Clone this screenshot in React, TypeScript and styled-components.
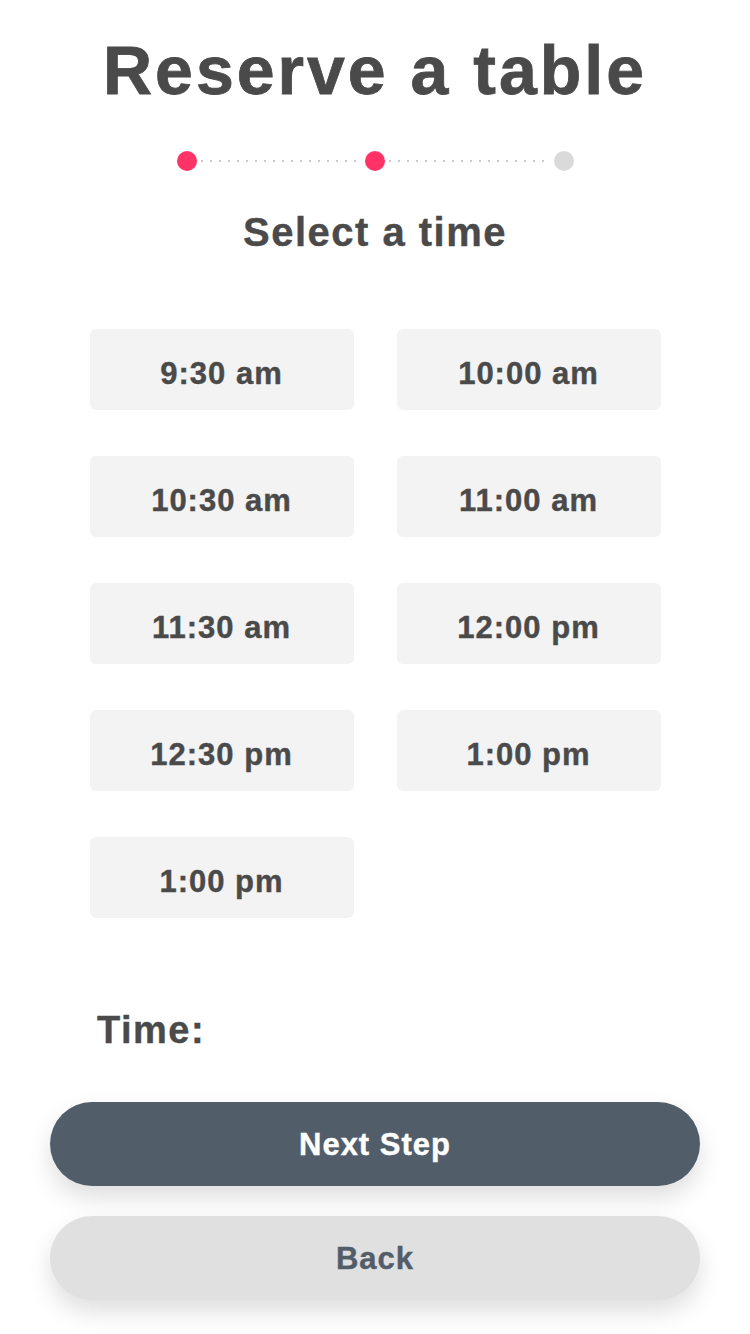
import { createGlobalStyle } from "styled-components";
import styled from "styled-components";

const GlobalStyle = createGlobalStyle`
  body {
    margin: 0;
    background: #fff;
    font-family: "Liberation Sans", Arial, sans-serif;
    color: #4a4a4a;
  }
`;

const Page = styled.div`
  width: 750px;
  min-height: 1334px;
  padding-top: 30px;
  display: flex;
  flex-direction: column;
  box-sizing: border-box;
`;

const Title = styled.h1`
  margin: 0;
  font-size: 68px;
  line-height: 80px;
  font-weight: 700;
  letter-spacing: 3px;
  text-align: center;
  -webkit-text-stroke: 0.8px #4a4a4a;
`;

const Stepper = styled.div`
  width: 397px;
  height: 20px;
  margin: 41px auto 0;
  display: flex;
  align-items: center;
`;

const Dot = styled.span<{ $active?: boolean }>`
  width: 20px;
  height: 20px;
  border-radius: 50%;
  flex-shrink: 0;
  background: ${({ $active }) => ($active ? "#ff3366" : "#dadada")};
`;

const DottedLine = styled.span`
  flex: 1;
  height: 2px;
  margin: 0 4px;
  background: repeating-linear-gradient(
    to right,
    #c9c9c9 0 2px,
    transparent 2px 9px
  );
`;

const Subtitle = styled.h2`
  margin: 38px 0 0;
  font-size: 40px;
  line-height: 46px;
  font-weight: 700;
  letter-spacing: 1.5px;
  text-align: center;
  -webkit-text-stroke: 0.4px #4a4a4a;
`;

const SlotGrid = styled.div`
  margin: 74px auto 0;
  display: grid;
  grid-template-columns: 264px 264px;
  column-gap: 43px;
  row-gap: 46px;
`;

const Slot = styled.button`
  height: 81px;
  border: none;
  border-radius: 6px;
  background: #f3f3f3;
  color: #4a4a4a;
  font-family: inherit;
  font-size: 31px;
  font-weight: 700;
  letter-spacing: 1px;
  -webkit-text-stroke: 0.4px #4a4a4a;
  cursor: pointer;
  padding: 8px 0 0;
`;

const TimeLabel = styled.div`
  margin: 90px 0 0 97px;
  font-size: 38px;
  line-height: 44px;
  font-weight: 700;
  letter-spacing: 1.5px;
  -webkit-text-stroke: 0.4px #4a4a4a;
`;

const ActionButton = styled.button<{ $primary?: boolean }>`
  width: 650px;
  height: 84px;
  margin: ${({ $primary }) => ($primary ? "50px" : "30px")} auto 0;
  padding: 2px 0 0;
  border: none;
  border-radius: 42px;
  font-family: inherit;
  font-size: 31px;
  font-weight: 700;
  letter-spacing: 1px;
  cursor: pointer;
  background: ${({ $primary }) => ($primary ? "#525d6a" : "#e0e0e0")};
  color: ${({ $primary }) => ($primary ? "#ffffff" : "#525d6a")};
  -webkit-text-stroke: 0.4px ${({ $primary }) => ($primary ? "#ffffff" : "#525d6a")};
  box-shadow: 0 12px 24px rgba(0, 0, 0, 0.13);
`;

const times = [
  "9:30 am",
  "10:00 am",
  "10:30 am",
  "11:00 am",
  "11:30 am",
  "12:00 pm",
  "12:30 pm",
  "1:00 pm",
  "1:00 pm",
];

export default function App() {
  return (
    <>
      <GlobalStyle />
      <Page>
        <Title>Reserve a table</Title>
        <Stepper>
          <Dot $active />
          <DottedLine />
          <Dot $active />
          <DottedLine />
          <Dot />
        </Stepper>
        <Subtitle>Select a time</Subtitle>
        <SlotGrid>
          {times.map((t, i) => (
            <Slot key={i}>{t}</Slot>
          ))}
        </SlotGrid>
        <TimeLabel>Time:</TimeLabel>
        <ActionButton $primary>Next Step</ActionButton>
        <ActionButton>Back</ActionButton>
      </Page>
    </>
  );
}
